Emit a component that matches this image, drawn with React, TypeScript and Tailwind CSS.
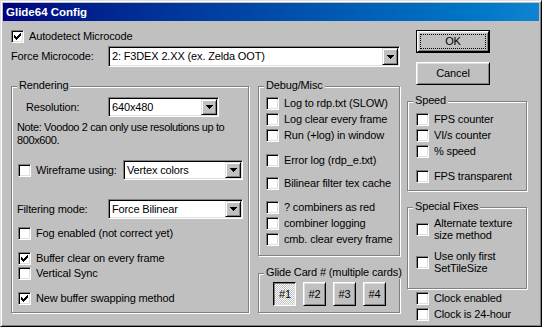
import type { ReactNode } from 'react';

const Tick = () => (
  <svg width="7" height="7" viewBox="0 0 7 7" shapeRendering="crispEdges">
    <rect x="0" y="2" width="1" height="3" fill="#000" />
    <rect x="1" y="3" width="1" height="3" fill="#000" />
    <rect x="2" y="4" width="1" height="3" fill="#000" />
    <rect x="3" y="3" width="1" height="3" fill="#000" />
    <rect x="4" y="2" width="1" height="3" fill="#000" />
    <rect x="5" y="1" width="1" height="3" fill="#000" />
    <rect x="6" y="0" width="1" height="3" fill="#000" />
  </svg>
);

const Arrow = () => (
  <svg width="7" height="4" viewBox="0 0 7 4" shapeRendering="crispEdges">
    <rect x="0" y="0" width="7" height="1" fill="#000" />
    <rect x="1" y="1" width="5" height="1" fill="#000" />
    <rect x="2" y="2" width="3" height="1" fill="#000" />
    <rect x="3" y="3" width="1" height="1" fill="#000" />
  </svg>
);

const Check = ({ on }: { on?: boolean }) => (
  <span className="w-[13px] h-[13px] shrink-0 bg-white border border-t-[#808080] border-l-[#808080] border-r-white border-b-white shadow-[inset_1px_1px_0_#000,inset_-1px_-1px_0_#dfdfdf] flex items-center justify-center">
    {on && <Tick />}
  </span>
);

const Row = ({ on, children, className = '' }: { on?: boolean; children: ReactNode; className?: string }) => (
  <div className={`flex items-center gap-[5px] ${className}`}>
    <Check on={on} />
    <span className="whitespace-nowrap">{children}</span>
  </div>
);

const Select = ({ value, className }: { value: string; className: string }) => (
  <div className={`bg-white border border-t-[#808080] border-l-[#808080] border-r-white border-b-white shadow-[inset_1px_1px_0_#000,inset_-1px_-1px_0_#dfdfdf] flex ${className}`}>
    <span className="flex-1 pl-[3px] flex items-center whitespace-nowrap overflow-hidden">{value}</span>
    <span className="w-[16px] m-[1px] bg-[#c0c0c0] border border-t-[#dfdfdf] border-l-[#dfdfdf] border-r-black border-b-black shadow-[inset_1px_1px_0_#fff,inset_-1px_-1px_0_#808080] flex items-center justify-center">
      <Arrow />
    </span>
  </div>
);

const Group = ({ title, className, children }: { title: string; className: string; children: ReactNode }) => (
  <div className={`relative border border-[#808080] shadow-[1px_1px_0_#fff,inset_1px_1px_0_#fff] flex flex-col ${className}`}>
    <span className="absolute -top-[8px] left-[5px] bg-[#c0c0c0] px-[2px] whitespace-nowrap">{title}</span>
    {children}
  </div>
);

const raised =
  'border border-t-white border-l-white border-r-black border-b-black shadow-[inset_1px_1px_0_#dfdfdf,inset_-1px_-1px_0_#808080]';

const CardBtn = ({ label, down }: { label: string; down?: boolean }) =>
  down ? (
    <div className="w-[23px] h-[24px] border border-t-black border-l-black border-r-white border-b-white shadow-[inset_1px_1px_0_#808080,inset_-1px_-1px_0_#dfdfdf] bg-[image:repeating-conic-gradient(#ffffff_0%_25%,#c0c0c0_0%_50%)] bg-[length:2px_2px] flex items-center justify-center pt-[1px] pl-[1px]">
      {label}
    </div>
  ) : (
    <div className={`w-[23px] h-[24px] ${raised} flex items-center justify-center`}>{label}</div>
  );

export default function App() {
  return (
    <div className="w-[542px] h-[327px] bg-[#c0c0c0] border border-t-[#dfdfdf] border-l-[#dfdfdf] border-r-black border-b-black shadow-[inset_1px_1px_0_#fff,inset_-1px_-1px_0_#808080] p-[2px] flex flex-col overflow-hidden font-['Liberation_Sans',Arial,sans-serif] text-[11px] leading-[13px] tracking-[-0.15px] text-black">
      {/* Title bar */}
      <div className="h-[18px] shrink-0 bg-gradient-to-r from-[#000080] to-[#1084d0] flex items-center pl-[3px] text-white font-bold text-[11.5px] tracking-normal">
        Glide64 Config
      </div>

      <div className="flex pl-[8px] pt-[9px]">
        {/* Left part */}
        <div className="w-[389px] flex flex-col">
          <Row on className="h-[13px]">Autodetect Microcode</Row>
          <div className="mt-[3px] flex items-center">
            <span className="w-[97px]">Force Microcode:</span>
            <Select value="2: F3DEX 2.XX (ex. Zelda OOT)" className="w-[292px] h-[21px]" />
          </div>

          <div className="mt-[19px] flex">
            <Group title="Rendering" className="w-[238px] h-[227px]">
              <div className="mt-[10px] flex items-center">
                <span className="ml-[14px] w-[82px]">Resolution:</span>
                <Select value="640x480" className="w-[111px] h-[20px]" />
              </div>
              <p className="mt-[4px] ml-[5px] whitespace-nowrap tracking-[-0.38px]">
                Note: Voodoo 2 can only use resolutions up to
                <br />
                800x600.
              </p>
              <div className="mt-[13px] flex items-center">
                <div className="ml-[6px] w-[105px]">
                  <Row>Wireframe using:</Row>
                </div>
                <Select value="Vertex colors" className="w-[120px] h-[20px]" />
              </div>
              <div className="mt-[19px] flex items-center">
                <span className="ml-[5px] w-[91px]">Filtering mode:</span>
                <Select value="Force Bilinear" className="w-[135px] h-[20px]" />
              </div>
              <div className="ml-[6px] flex flex-col">
                <Row className="mt-[8px]">Fog enabled (not correct yet)</Row>
                <Row on className="mt-[12px]">Buffer clear on every frame</Row>
                <Row className="mt-[2px]">Vertical Sync</Row>
                <Row on className="mt-[12px]">New buffer swapping method</Row>
              </div>
            </Group>

            <div className="ml-[9px] w-[142px] flex flex-col">
              <Group title="Debug/Misc" className="h-[170px] pl-[7px]">
                <Row className="mt-[10px]">Log to rdp.txt (SLOW)</Row>
                <Row className="mt-[3px]">Log clear every frame</Row>
                <Row className="mt-[3px]">Run (+log) in window</Row>
                <Row className="mt-[12px]">Error log (rdp_e.txt)</Row>
                <Row className="mt-[10px]">Bilinear filter tex cache</Row>
                <Row className="mt-[11px]">? combiners as red</Row>
                <Row className="mt-[3px]">combiner logging</Row>
                <Row className="mt-[3px]">cmb. clear every frame</Row>
              </Group>
              <Group title="Glide Card # (multiple cards)" className="mt-[17px] h-[40px]">
                <div className="mt-[8px] ml-[14px] flex gap-[7px]">
                  <CardBtn label="#1" down />
                  <CardBtn label="#2" />
                  <CardBtn label="#3" />
                  <CardBtn label="#4" />
                </div>
              </Group>
            </div>
          </div>
        </div>

        {/* Right part */}
        <div className="ml-[7px] w-[120px] flex flex-col">
          <div className="ml-[9px] w-[74px] h-[23px] border border-black flex">
            <div className={`flex-1 ${raised} flex`}>
              <div className="flex-1 m-[2px] border border-dotted border-black flex items-center justify-center">OK</div>
            </div>
          </div>
          <div className={`mt-[9px] ml-[9px] w-[74px] h-[23px] ${raised} flex items-center justify-center`}>Cancel</div>

          <Group title="Speed" className="mt-[16px] h-[90px] pl-[8px]">
            <Row className="mt-[11px]">FPS counter</Row>
            <Row className="mt-[3px]">VI/s counter</Row>
            <Row className="mt-[3px]">% speed</Row>
            <Row className="mt-[12px]">FPS transparent</Row>
          </Group>

          <Group title="Special Fixes" className="mt-[16px] h-[82px] pl-[8px]">
            <div className="mt-[9px] flex items-center gap-[5px]">
              <Check />
              <span className="leading-[12px]">
                Alternate texture
                <br />
                size method
              </span>
            </div>
            <div className="mt-[9px] flex items-center gap-[5px]">
              <Check />
              <span className="leading-[12px]">
                Use only first
                <br />
                SetTileSize
              </span>
            </div>
          </Group>

          <div className="ml-[9px] mt-[3px] flex flex-col gap-[3px]">
            <Row>Clock enabled</Row>
            <Row>Clock is 24-hour</Row>
          </div>
        </div>
      </div>
    </div>
  );
}
